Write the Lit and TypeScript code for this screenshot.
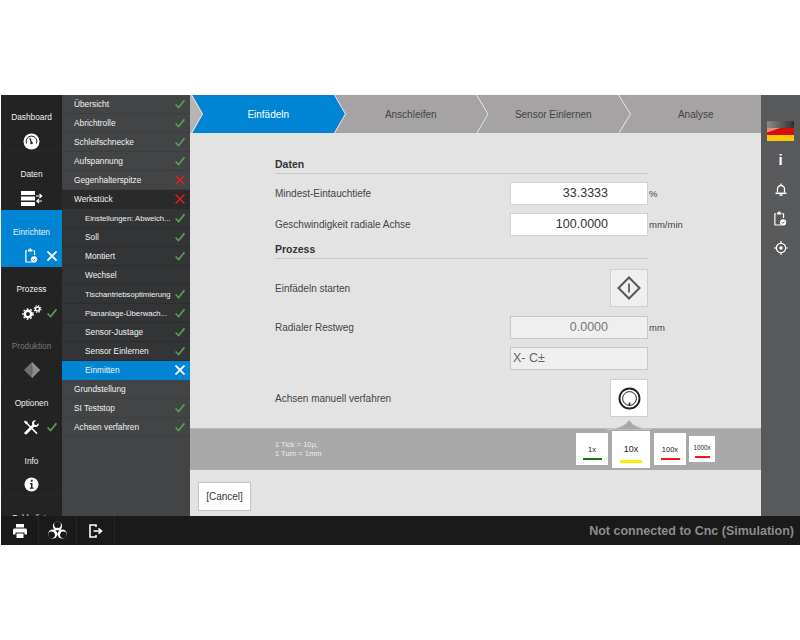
import { LitElement, html, css, svg } from 'lit';
import { customElement } from 'lit/decorators.js';

type Mark = 'ok' | 'bad' | 'cur' | '';

const check = html`<svg class="mark" viewBox="0 0 10 9"><path d="M.6 5 3.6 8 9.4.8" fill="none" stroke="#5c9a5c" stroke-width="1.7"/></svg>`;
const cross = (c: string, w = 1.5) =>
  html`<svg class="mark" viewBox="0 0 10 10"><path d="M.5.5 9.5 9.5M9.5.5.5 9.5" fill="none" stroke=${c} stroke-width=${w}/></svg>`;

const markOf = (m: Mark) => {
  if (m === 'ok') return check;
  if (m === 'bad') return cross('#e0201c');
  if (m === 'cur') return cross('#fff', 1.8);
  return '';
};

const clipPaths = svg`
  <path d="M2.5 3H1v13h7" fill="none" stroke="currentColor" stroke-width="1.4"/>
  <path d="M9.5 3H11v5" fill="none" stroke="currentColor" stroke-width="1.4"/>
  <path d="M3.5 3V1.6h1.6V.4h1.8v1.2h1.6V3v1h-5z" fill="currentColor"/>
  <circle cx="10.5" cy="13" r="3.6" fill="currentColor"/>
  <path d="M8.8 13l1.2 1.2 2-2.2" fill="none" stroke="#555" stroke-width="1"/>`;

const icons = {
  gauge: html`<svg width="17" height="17" viewBox="0 0 17 17"><circle cx="8.5" cy="8.5" r="8" fill="#fff"/><path d="M3.500 10.500a5.400 5.400 0 1 1 10 0" fill="none" stroke="#232323" stroke-width="1"/><path d="M8.500 9.500 6.800 5" stroke="#232323" stroke-width="1.200"/><circle cx="8.500" cy="10" r="1.300" fill="#232323"/></svg>`,
  data: html`<svg width="22" height="15" viewBox="0 0 22 15"><path d="M0 0h14v4H0zM0 5.5h14v4H0zM0 11h14v4H0z" fill="#fff"/><path d="M15 5h5.500M18.500 3l2.200 2-2.200 2M21 10h-5.500M18 8l-2.200 2 2.200 2" fill="none" stroke="#fff" stroke-width="1.200"/></svg>`,
  clip: html`<svg class="clip" width="13" height="17" viewBox="0 0 15 17">${clipPaths}</svg>`,
  gears: html`<svg width="20" height="15" viewBox="0 0 20 15"><g fill="none" stroke="#fff"><circle cx="6" cy="9" r="3.200" stroke-width="2.400"/><circle cx="6" cy="9" r="5" stroke-width="1.400" stroke-dasharray="1.800 1.800"/><circle cx="15.500" cy="4" r="2" stroke-width="1.500"/><circle cx="15.500" cy="4" r="3.400" stroke-width="1.100" stroke-dasharray="1.300 1.400"/></g></svg>`,
  diamond: html`<svg width="16" height="16" viewBox="0 0 16 16"><path d="M8 0 16 8 8 16 0 8z" fill="#6f6f6f"/><path d="M8 0 16 8 8 16z" fill="#8d8d8d"/><path d="M8 4.500v7" stroke="#555" stroke-width="1"/></svg>`,
  tools: html`<svg width="15" height="15" viewBox="0 0 15 15" fill="#fff"><path d="M1 .5 3.500 2 4 3.500 13.500 13l-1 1.200L3 4.500 1.600 4 0 1.600z"/><path d="M14.500 3.200 12.300 5.300 10.500 4.500 9.800 2.700 11.900.5C9.900-.1 8 1.400 8 3.400c0 .5.100.9.300 1.300L.9 12c-.7.700-.7 1.500-.1 2.100.6.600 1.500.6 2.100 0l7.300-7.400c2.600 1 5.300-1.100 4.300-3.500z"/></svg>`,
  info: html`<svg width="15" height="15" viewBox="0 0 15 15"><circle cx="7.500" cy="7.500" r="7" fill="#fff"/><path d="M6 6h2.500v4.600H9.500v1.200H5.800v-1.200H7V7.200H6zM6.800 2.800h1.800v1.900H6.800z" fill="#232323"/></svg>`,
  printer: html`<svg width="14" height="14" viewBox="0 0 14 14" fill="#fff"><path d="M3 0h8v3.500H3zM1.500 4.500h11c.8 0 1.500.7 1.500 1.500v4.500h-2.500V8.500h-9v2H0V6c0-.8.700-1.500 1.500-1.500z"/><path d="M3.500 9.500h7V14h-7z"/></svg>`,
  bio: html`<svg width="19" height="19" viewBox="0 0 19 19">
    <g fill="#fff"><circle cx="9.500" cy="5" r="4.600"/><circle cx="4.800" cy="13" r="4.600"/><circle cx="14.200" cy="13" r="4.600"/></g>
    <g fill="#1a1a1a"><circle cx="9.500" cy="3.700" r="3.400"/><circle cx="3.600" cy="13.800" r="3.400"/><circle cx="15.400" cy="13.800" r="3.400"/></g>
    <circle cx="9.500" cy="10.300" r="3" fill="none" stroke="#fff" stroke-width="1.100"/>
    <circle cx="9.500" cy="10.300" r="1" fill="#1a1a1a"/>
  </svg>`,
  exit: html`<svg width="14" height="14" viewBox="0 0 14 14" fill="none" stroke="#fff" stroke-width="1.600"><path d="M7 3V1H1v12h6v-2"/><path d="M4.500 7H12M9.500 4.300 12.500 7l-3 2.700"/></svg>`,
  bell: html`<svg width="12" height="13" viewBox="0 0 12 13" fill="none" stroke="#fff" stroke-width="1.300"><path d="M2.500 9.500V6a3.500 3.500 0 0 1 7 0v3.500"/><path d="M.5 10.300h11" stroke-width="1.500"/><path d="M6 .5v1.500M4.500 12h3"/></svg>`,
  target: html`<svg width="14" height="14" viewBox="0 0 14 14" fill="none" stroke="#fff"><circle cx="7" cy="7" r="4.600" stroke-width="1.400"/><circle cx="7" cy="7" r="1.700" fill="#fff" stroke="none"/><path d="M7 0v2.300M7 11.700V14M0 7h2.300M11.700 7H14" stroke-width="1.200"/></svg>`,
  start: html`<svg width="24" height="24" viewBox="0 0 24 24" fill="none" stroke="#555"><path d="M12 1.500 22.500 12 12 22.500 1.500 12z" stroke-width="2"/><path d="M12 7.500v9" stroke-width="1.700"/></svg>`,
  wheel: html`<svg width="23" height="23" viewBox="0 0 23 23" fill="none" stroke="#222"><circle cx="11.500" cy="11.500" r="10" stroke-width="1.900"/><circle cx="11.500" cy="11.500" r="6.900" stroke-width="1"/><path d="M11.500 15.500v2.700" stroke-width="1.500"/></svg>`,
};

const flag = html`<svg width="27" height="20" viewBox="0 0 27 20">
  <defs><linearGradient id="top" x1="0" x2="1"><stop offset="0" stop-color="#8a8a8a"/><stop offset="1" stop-color="#333"/></linearGradient></defs>
  <path d="M0 0h27v7H0z" fill="url(#top)"/><path d="M0 7h27v7H0z" fill="#d30f0a"/><path d="M0 14h27v6H0z" fill="#fdc80c"/>
  <path d="M0 7h13L0 11.500z" fill="#e98a80"/><path d="M27 0v3l-3 2z" fill="#222"/>
</svg>`;

const navItems = [
  { label: 'Dashboard', icon: icons.gauge, mark: '' },
  { label: 'Daten', icon: icons.data, mark: '' },
  { label: 'Einrichten', icon: icons.clip, mark: 'cur', active: true },
  { label: 'Prozess', icon: icons.gears, mark: 'ok' },
  { label: 'Produktion', icon: icons.diamond, mark: '', off: true },
  { label: 'Optionen', icon: icons.tools, mark: 'ok' },
  { label: 'Info', icon: icons.info, mark: '' },
  { label: 'Fehlerliste', icon: '', mark: '' },
];

const menuItems: { t: string; m: Mark; k: string }[] = [
  { t: 'Übersicht', m: 'ok', k: 'top' },
  { t: 'Abrichtrolle', m: 'ok', k: 'top' },
  { t: 'Schleifschnecke', m: 'ok', k: 'top' },
  { t: 'Aufspannung', m: 'ok', k: 'top' },
  { t: 'Gegenhalterspitze', m: 'bad', k: 'top' },
  { t: 'Werkstück', m: 'bad', k: 'open' },
  { t: 'Einstellungen: Abweich...', m: 'ok', k: 'sub tight' },
  { t: 'Soll', m: 'ok', k: 'sub' },
  { t: 'Montiert', m: 'ok', k: 'sub' },
  { t: 'Wechsel', m: '', k: 'sub' },
  { t: 'Tischantriebsoptimierung', m: 'ok', k: 'sub tight' },
  { t: 'Plananlage-Überwach...', m: 'ok', k: 'sub tight' },
  { t: 'Sensor-Justage', m: 'ok', k: 'sub' },
  { t: 'Sensor Einlernen', m: 'ok', k: 'sub' },
  { t: 'Einmitten', m: 'cur', k: 'sub cur' },
  { t: 'Grundstellung', m: '', k: 'top' },
  { t: 'SI Teststop', m: 'ok', k: 'top' },
  { t: 'Achsen verfahren', m: 'ok', k: 'top' },
];

const steps = ['Einfädeln', 'Anschleifen', 'Sensor Einlernen', 'Analyse'];

const factors = [
  { t: '1x', c: 'f1', bar: '#0b7a0b' },
  { t: '10x', c: 'f10', bar: '#ffee00' },
  { t: '100x', c: 'f100', bar: '#f01a10' },
  { t: '1000x', c: 'f1000', bar: '#f01a10' },
];

@customElement('app-root')
export class AppRoot extends LitElement {
  static styles = css`
    :host {
      display: block;
      height: 640px;
      background: #fff;
      font-family: 'Liberation Sans', Arial, sans-serif;
      overflow: hidden;
    }
    .app {
      margin: 95px 0 0 1px;
      width: 799px;
      height: 450px;
      display: grid;
      grid-template-columns: 61px 128px 571px 39px;
      grid-template-rows: 421px 29px;
    }
    .nav {
      background: #232323;
      overflow: hidden;
    }
    .nav-item {
      height: 57.25px;
      box-sizing: border-box;
      padding-top: 17px;
      color: #f0f0f0;
      font-size: 8.3px;
      text-align: center;
      line-height: 10px;
      border-bottom: 1px solid #272727;
    }
    .nav-item.active {
      background: #0085d5;
      border-bottom-color: #0085d5;
    }
    .nav-item.off {
      color: #777;
    }
    .nav-icon {
      margin-top: 10px;
      height: 18px;
      display: grid;
      grid-template-columns: 1fr auto 1fr;
      align-items: center;
      justify-items: center;
    }
    .nav-icon .side {
      justify-self: end;
      padding-right: 5px;
      display: flex;
    }
    .clip {
      color: #fff;
    }
    .mark {
      width: 10px;
      height: 10px;
      display: block;
      flex: none;
    }
    .menu {
      background: #434446;
      overflow: hidden;
    }
    .row {
      height: 19px;
      box-sizing: border-box;
      display: flex;
      align-items: center;
      justify-content: space-between;
      padding: 0 5px 0 12px;
      font-size: 8.3px;
      color: #f2f2f2;
      white-space: nowrap;
      border-bottom: 1px solid #3c3d3f;
    }
    .row.open {
      background: #2a2a2a;
      border-bottom-color: #2a2a2a;
    }
    .row.sub {
      background: #333435;
      padding-left: 23px;
      border-bottom-color: #2c2d2e;
    }
    .row.tight {
      font-size: 7.7px;
    }
    .row.cur {
      background: #0085d5;
      border-bottom-color: #0085d5;
    }
    .main {
      background: #e3e3e3;
      display: flex;
      flex-direction: column;
      min-width: 0;
    }
    .stepper {
      height: 38px;
      flex: none;
      position: relative;
      background: #a5a3a3;
    }
    .stepper svg {
      position: absolute;
      left: 0;
      top: 0;
    }
    .labels {
      position: relative;
      height: 38px;
      display: grid;
      grid-template-columns: repeat(4, 142.500px);
      padding-left: 7px;
      align-items: center;
      justify-items: center;
      font-size: 10px;
      color: #444;
    }
    .labels .on {
      color: #fff;
    }
    .form {
      flex: none;
      margin-left: 85px;
      width: 450px;
      height: 295px;
      box-sizing: border-box;
      padding-top: 22px;
    }
    .heading {
      width: 373px;
      height: 19px;
      box-sizing: border-box;
      border-bottom: 1px solid #c9c9c9;
      font-size: 10.500px;
      font-weight: bold;
      color: #333;
      line-height: 19px;
    }
    .heading.first {
      margin-bottom: 8px;
    }
    .heading.second {
      margin-bottom: 10px;
    }
    .line {
      display: grid;
      grid-template-columns: 235px 138px auto;
      align-items: center;
      font-size: 10px;
      color: #444;
      margin-bottom: 8px;
    }
    .line.tall {
      margin-bottom: 9px;
    }
    .line.close {
      margin-bottom: 4px;
    }
    .field {
      height: 23px;
      box-sizing: border-box;
      border: 1px solid #d2d2d2;
      background: #fff;
      font-size: 12.500px;
      color: #333;
      line-height: 21px;
      text-align: right;
      padding-right: 39px;
    }
    .field.ro {
      background: #efefef;
      border-color: #c8c8c8;
      color: #777;
    }
    .field.ro.text {
      text-align: left;
      padding: 0 0 0 2px;
      font-size: 12.500px;
      color: #666;
    }
    .unit {
      padding-left: 1px;
      font-size: 9.500px;
    }
    .square {
      grid-column: 2;
      justify-self: end;
      width: 38px;
      height: 38px;
      box-sizing: border-box;
      border: 1px solid #cfcfcf;
      background: #efefef;
      display: flex;
      align-items: center;
      justify-content: center;
    }
    .square.white {
      background: #fff;
    }
    .line .label {
      grid-column: 1;
      grid-row: 1;
    }
    .line .square {
      grid-row: 1;
    }
    .band {
      flex: none;
      height: 41px;
      position: relative;
      background: #a9a9a9;
      border-top: 1px solid #b9b9b9;
      display: flex;
      align-items: center;
      padding-left: 85px;
      font-size: 7.500px;
      line-height: 8.500px;
      color: #ececec;
    }
    .bump {
      position: absolute;
      left: 417px;
      top: -10px;
    }
    .factors {
      position: absolute;
      left: 386px;
      top: 1px;
      height: 38px;
      display: flex;
      align-items: center;
      gap: 4px;
    }
    .factor {
      background: #fff;
      color: #222;
      display: flex;
      flex-direction: column;
      align-items: center;
      justify-content: flex-end;
      box-sizing: border-box;
    }
    .factor i {
      display: block;
      height: 2px;
    }
    .f1 {
      width: 32px;
      height: 32px;
      font-size: 7.500px;
      gap: 4px;
      padding-bottom: 5px;
    }
    .f1 i {
      width: 19px;
    }
    .f10 {
      width: 38px;
      height: 37px;
      font-size: 9px;
      gap: 6px;
      padding-bottom: 5px;
    }
    .f10 i {
      width: 22px;
      height: 3px;
    }
    .f100 {
      width: 32px;
      height: 32px;
      font-size: 7.500px;
      gap: 4px;
      padding-bottom: 5px;
    }
    .f100 i {
      width: 19px;
    }
    .f1000 {
      width: 26px;
      height: 26px;
      font-size: 6.300px;
      gap: 4px;
      padding-bottom: 4px;
      margin-left: -1px;
    }
    .f1000 i {
      width: 15px;
    }
    .foot {
      flex: 1;
      padding: 12px 0 0 8px;
    }
    .cancel {
      display: block;
      width: 53px;
      height: 29px;
      box-sizing: border-box;
      background: #fff;
      border: 1px solid #c4c4c4;
      font: 10px 'Liberation Sans', Arial, sans-serif;
      color: #333;
      padding: 0;
    }
    .rail {
      background: #58595b;
      display: flex;
      flex-direction: column;
      align-items: center;
      padding-top: 26px;
    }
    .rail .flag {
      height: 20px;
      margin-bottom: 4px;
    }
    .rail .slot {
      height: 29.500px;
      display: flex;
      align-items: center;
      justify-content: center;
      color: #fff;
    }
    .rail .i {
      font-size: 15px;
      font-weight: bold;
    }
    .bar {
      grid-column: 1 / -1;
      background: #1a1a1a;
      display: flex;
      align-items: center;
    }
    .bar .tool {
      width: 38px;
      height: 29px;
      box-sizing: border-box;
      border-right: 1px solid #262626;
      display: flex;
      align-items: center;
      justify-content: center;
    }
    .status {
      margin-left: auto;
      padding-right: 6px;
      color: #8c8c8c;
      font-size: 12.500px;
      font-weight: bold;
    }
  `;

  render() {
    return html`
      <div class="app">
        <nav class="nav">
          ${navItems.map(
            n => html`
              <div class="nav-item ${n.active ? 'active' : ''} ${n.off ? 'off' : ''}">
                ${n.label}
                <div class="nav-icon">
                  <span></span>${n.icon}<span class="side">${markOf(n.mark as Mark)}</span>
                </div>
              </div>
            `,
          )}
        </nav>

        <div class="menu">
          ${menuItems.map(
            r => html`<div class="row ${r.k}"><span>${r.t}</span>${markOf(r.m)}</div>`,
          )}
        </div>

        <div class="main">
          <div class="stepper">
            <svg width="571" height="38" viewBox="0 0 571 38" fill="none" stroke="#e6e6e6" stroke-width="1">
              <path d="M0 0h1.500l11 19-11 19H0z" fill="#b5b5b3" stroke="none"/>
              <path d="M2.500 0H144l11 19-11 19H2.500l10.500-19z" fill="#0085d5" stroke="none"/>
              <path d="M144.500 0l11 19-11 19M286.500 0l11.500 19-11 19M428.500 0l12 19-11.500 19M1.500 0l11 19-11 19"/>
            </svg>
            <div class="labels">
              ${steps.map((s, i) => html`<span class=${i === 0 ? 'on' : ''}>${s}</span>`)}
            </div>
          </div>

          <div class="form">
            <div class="heading first">Daten</div>
            <div class="line">
              <span>Mindest-Eintauchtiefe</span>
              <div class="field">33.3333</div>
              <span class="unit">%</span>
            </div>
            <div class="line close">
              <span>Geschwindigkeit radiale Achse</span>
              <div class="field">100.0000</div>
              <span class="unit">mm/min</span>
            </div>
            <div class="heading second">Prozess</div>
            <div class="line tall">
              <span class="label">Einfädeln starten</span>
              <div class="square">${icons.start}</div>
            </div>
            <div class="line">
              <span>Radialer Restweg</span>
              <div class="field ro">0.0000</div>
              <span class="unit">mm</span>
            </div>
            <div class="line tall">
              <span></span>
              <div class="field ro text">X- C±</div>
            </div>
            <div class="line">
              <span class="label">Achsen manuell verfahren</span>
              <div class="square white">${icons.wheel}</div>
            </div>
          </div>

          <div class="band">
            <svg class="bump" width="44" height="11" viewBox="0 0 44 11">
              <path d="M0 10.500C10 10 18 7 22 1 26 7 34 10 44 10.500V11H0z" fill="#a9a9a9" stroke="#cfcfcf" stroke-width="1"/>
            </svg>
            <div>1 Tick = 10µ,<br />1 Turn = 1mm</div>
            <div class="factors">
              ${factors.map(
                f => html`
                  <div class="factor ${f.c}">
                    <span>${f.t}</span><i style="background:${f.bar}"></i>
                  </div>
                `,
              )}
            </div>
          </div>

          <div class="foot"><button class="cancel">[Cancel]</button></div>
        </div>

        <aside class="rail">
          <div class="flag">${flag}</div>
          <div class="slot i">i</div>
          <div class="slot">${icons.bell}</div>
          <div class="slot">${icons.clip}</div>
          <div class="slot">${icons.target}</div>
        </aside>

        <footer class="bar">
          <div class="tool">${icons.printer}</div>
          <div class="tool">${icons.bio}</div>
          <div class="tool">${icons.exit}</div>
          <div class="status">Not connected to Cnc (Simulation)</div>
        </footer>
      </div>
    `;
  }
}
